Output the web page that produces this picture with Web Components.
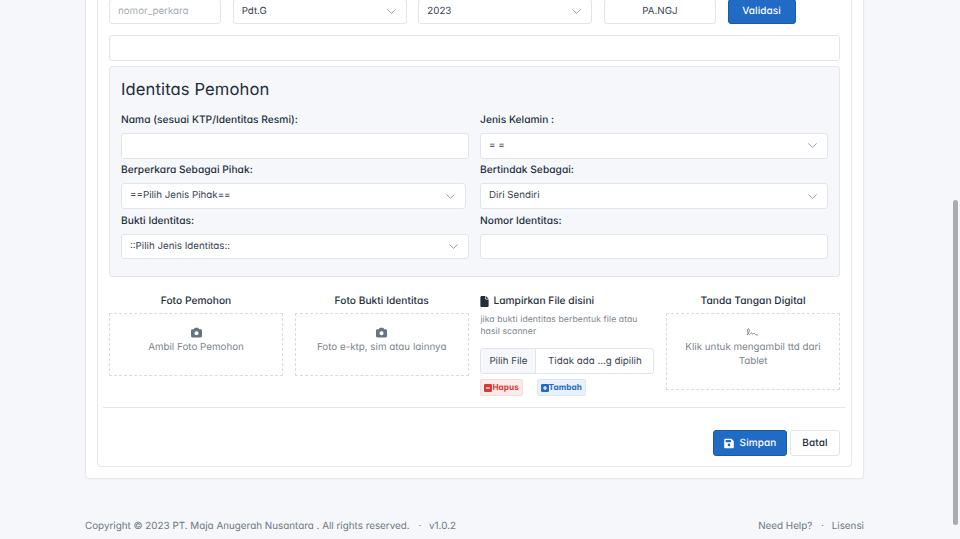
<!DOCTYPE html>
<html lang="id"><head><meta charset="utf-8"><title>Identitas Pemohon</title>
<style>
html,body{margin:0;height:539px;overflow:hidden;background:#f5f7fb}
body{font:10px/1.4 Inter,"Liberation Sans",sans-serif;color:#232e3c;font-feature-settings:"cv11";text-rendering:geometricPrecision;-webkit-font-smoothing:antialiased}
</style></head><body>
<template id="t-page"><style>
:host{display:flex;flex-direction:column;justify-content:flex-end;height:539px;box-sizing:border-box;padding:0 96px 0 85px;position:relative;overflow:hidden}
::slotted(*){flex:none}
.thumb{position:absolute;right:2px;top:200px;width:5px;height:325px;border-radius:3px;background:#a9acb1}
</style><slot></slot><div class="thumb"></div></template>

<template id="t-card"><style>
:host{display:block;background:#fff;border:1px solid #e6e8ec;border-radius:4px;padding:0 11px 11px;box-shadow:0 1px 2px rgba(35,46,60,.03)}
:host([inner]){padding:30px 11px 10px;box-shadow:none}
</style><slot></slot></template>

<template id="t-field"><style>
:host{display:block;box-sizing:border-box;height:25.5px;background:#fff;border:1px solid #e1e4e9;border-radius:3px;font-size:9.75px;line-height:23.5px;padding:0 8px;color:#3a4553;position:relative;white-space:nowrap;letter-spacing:0}
:host([ph]){color:#a5acb5}
:host([center]){text-align:center}
svg{position:absolute;right:10px;top:50%;margin-top:-2.5px;width:9px;height:5px;fill:none;stroke:#8a94a0;stroke-width:.9;stroke-linecap:round;stroke-linejoin:round}
:host(:not([select])) svg{display:none}
</style><slot></slot><svg viewBox="0 0 9 5"><path d="M.7.7l3.8 3.6L8.3.7"/></svg></template>

<template id="t-btn"><style>
:host{display:inline-flex;align-items:center;justify-content:center;gap:6px;box-sizing:border-box;height:26px;border-radius:3px;font-size:10px;font-weight:500;letter-spacing:.1px;border:1px solid #e1e4e9;background:#fff;color:#232e3c}
:host([primary]){background:#206bc4;border-color:#1a5ca9;color:#fff}
</style><slot></slot></template>

<template id="t-label"><style>
:host{display:block;font-size:10.2px;font-weight:500;letter-spacing:.03px;line-height:13px;color:#232e3c;margin-bottom:6px}
:host([center]){text-align:center;margin-bottom:5px}
</style><slot></slot></template>

<template id="t-section"><style>
:host{display:block;background:#f5f7fb;border:1px solid #e3e6eb;border-radius:3px;box-sizing:border-box;margin-top:5px;height:211px;padding:11px 11px 0}
h2{margin:0 0 12px;font-size:16.6px;font-weight:400;line-height:24px;color:#232e3c;letter-spacing:.1px}
.g{display:grid;grid-template-columns:348px 348px;column-gap:11px;row-gap:5.8px}
</style><h2><slot name="title"></slot></h2><div class="g"><slot></slot></div></template>

<template id="t-drop"><style>
:host{display:flex;flex-direction:column;align-items:center;box-sizing:border-box;border:1px dashed #d9dce1;height:63px;padding:13px 6px 0;color:#7b8490;font-size:9.8px;line-height:14px;text-align:center;letter-spacing:0}
:host([tall]){height:77px}
</style><slot name="icon"></slot><slot></slot></template>

<template id="t-file"><style>
:host{display:flex;box-sizing:border-box;height:26px;border:1px solid #e1e4e9;border-radius:3px;background:#fff;font-size:9.75px;line-height:25px;color:#3a4553;overflow:hidden;letter-spacing:0;white-space:nowrap}
.b{background:#f5f7fb;border-right:1px solid #e1e4e9;padding:0 8px;flex:none}
.n{flex:1;text-align:center}
</style><span class="b">Pilih File</span><span class="n">Tidak ada ...g dipilih</span></template>

<template id="t-badge"><style>
:host{display:inline-flex;align-items:center;box-sizing:border-box;height:17px;padding:1px 3px 0;border-radius:2px;font-size:8.2px;font-weight:700;letter-spacing:.1px;background:#fbeaea;color:#d63939;border:1px solid #f5dcdc}
:host([blue]){background:#e9f0f9;color:#206bc4;border-color:#dbe6f3}
svg{width:8px;height:8px;display:block;margin-top:-1px}
</style><svg viewBox="0 0 8 8"><rect width="8" height="8" rx="1.2" fill="currentColor"/><path id="p" d="M2 4h4" stroke="#fff" stroke-width="1.2"/></svg><slot></slot></template>

<template id="t-footer"><style>
:host{display:flex;justify-content:space-between;font-size:9.85px;color:#6e7783;line-height:14px;padding:40px 0 6px;letter-spacing:0}
</style><span><slot name="left"></slot></span><span><slot name="right"></slot></span></template>

<app-page>
 <app-card>
  <app-card inner>
   <div style="display:grid;grid-template-columns:112px 174px 174px 112px 68px;column-gap:11.65px">
    <app-field ph>nomor_perkara</app-field>
    <app-field select>Pdt.G</app-field>
    <app-field select>2023</app-field>
    <app-field center>PA.NGJ</app-field>
    <app-btn primary style="height:25.5px">Validasi</app-btn>
   </div>
   <app-field style="margin-top:11px;height:26px"></app-field>
   <app-section>
    <span slot="title">Identitas Pemohon</span>
    <div><app-label>Nama (sesuai KTP/Identitas Resmi):</app-label><app-field></app-field></div>
    <div><app-label>Jenis Kelamin :</app-label><app-field select>= =</app-field></div>
    <div><app-label>Berperkara Sebagai Pihak:</app-label><app-field select style="width:345px">==Pilih Jenis Pihak==</app-field></div>
    <div><app-label>Bertindak Sebagai:</app-label><app-field select>Diri Sendiri</app-field></div>
    <div><app-label>Bukti Identitas:</app-label><app-field select>::Pilih Jenis Identitas::</app-field></div>
    <div><app-label>Nomor Identitas:</app-label><app-field></app-field></div>
   </app-section>
   <div style="display:grid;grid-template-columns:174px 174px 174px 174px;column-gap:11.7px;margin-top:18px;align-items:start">
    <div><app-label center>Foto Pemohon</app-label>
     <app-drop><svg slot="icon" viewBox="0 0 512 512" width="11" height="11" style="fill:#667382;display:block;margin-bottom:2.5px"><path d="M149 66l-12 34H64C29 100 0 129 0 164v256c0 35 29 64 64 64h384c35 0 64-29 64-64V164c0-35-29-64-64-64h-73l-12-34c-6-19-24-34-44-34H193c-20 0-38 15-44 34zM256 196a96 96 0 110 192 96 96 0 010-192z"/></svg>Ambil Foto Pemohon</app-drop></div>
    <div><app-label center>Foto Bukti Identitas</app-label>
     <app-drop><svg slot="icon" viewBox="0 0 512 512" width="11" height="11" style="fill:#667382;display:block;margin-bottom:2.5px"><path d="M149 66l-12 34H64C29 100 0 129 0 164v256c0 35 29 64 64 64h384c35 0 64-29 64-64V164c0-35-29-64-64-64h-73l-12-34c-6-19-24-34-44-34H193c-20 0-38 15-44 34zM256 196a96 96 0 110 192 96 96 0 010-192z"/></svg>Foto e-ktp, sim atau lainnya</app-drop></div>
    <div><app-label style="margin-bottom:6px;display:flex;align-items:center;gap:4px"><svg viewBox="0 0 384 512" width="9" height="11" style="fill:#232e3c;display:block"><path d="M64 0C29 0 0 29 0 64v384c0 35 29 64 64 64h256c35 0 64-29 64-64V160H256c-18 0-32-14-32-32V0H64zm192 0v128h128L256 0z"/></svg>Lampirkan File disini</app-label>
     <div style="font-size:8.6px;line-height:12px;color:#7b8490;letter-spacing:.1px;margin-bottom:10px">jika bukti identitas berbentuk file atau hasil scanner</div>
     <app-file></app-file>
     <div style="display:flex;gap:13.5px;margin-top:5px"><app-badge>Hapus</app-badge><app-badge blue>Tambah</app-badge></div></div>
    <div><app-label center>Tanda Tangan Digital</app-label>
     <app-drop tall><svg slot="icon" viewBox="0 0 14 10" width="14" height="10" style="fill:none;stroke:#667382;stroke-width:.8;display:block;margin-bottom:3.5px"><path d="M1 8c2-2 3-5 2-6S1 3 2 6s2 1 3 0 1 2 2 1 1-1 2 0 1 1 3 1"/></svg>Klik untuk mengambil ttd dari Tablet</app-drop></div>
   </div>
   <div style="height:1px;background:#e6e8ec;margin:11px -6px 22px"></div>
   <div style="display:flex;justify-content:flex-end;gap:3px">
    <app-btn primary style="width:74px"><svg viewBox="0 0 448 512" width="10" height="11" style="fill:#fff;display:block"><path d="M64 32C29 32 0 61 0 96v320c0 35 29 64 64 64h320c35 0 64-29 64-64V173c0-17-7-33-19-45l-74-77c-12-12-28-19-45-19H64zm0 96c0-18 14-32 32-32h192c18 0 32 14 32 32v32c0 18-14 32-32 32H96c-18 0-32-14-32-32v-32zm160 128a64 64 0 110 128 64 64 0 010-128z"/></svg>Simpan</app-btn>
    <app-btn style="width:50px">Batal</app-btn>
   </div>
  </app-card>
 </app-card>
 <app-footer>
  <span slot="left">Copyright © 2023 PT. Maja Anugerah Nusantara . All rights reserved. <span style="margin:0 5px 0 6px">·</span> v1.0.2</span>
  <span slot="right">Need Help? <span style="margin:0 5px 0 6px">·</span> Lisensi</span>
 </app-footer>
</app-page>
<script>
const map={'app-page':'t-page','app-card':'t-card','app-field':'t-field','app-btn':'t-btn','app-label':'t-label','app-section':'t-section','app-drop':'t-drop','app-file':'t-file','app-badge':'t-badge','app-footer':'t-footer'};
for(const [name,id] of Object.entries(map)){
 customElements.define(name,class extends HTMLElement{
  constructor(){super();const r=this.attachShadow({mode:'open'});r.appendChild(document.getElementById(id).content.cloneNode(true));
   if(name==='app-badge'&&this.hasAttribute('blue'))r.getElementById('p').setAttribute('d','M2 4h4M4 2v4');}
 });
}
</script>
</body></html>
